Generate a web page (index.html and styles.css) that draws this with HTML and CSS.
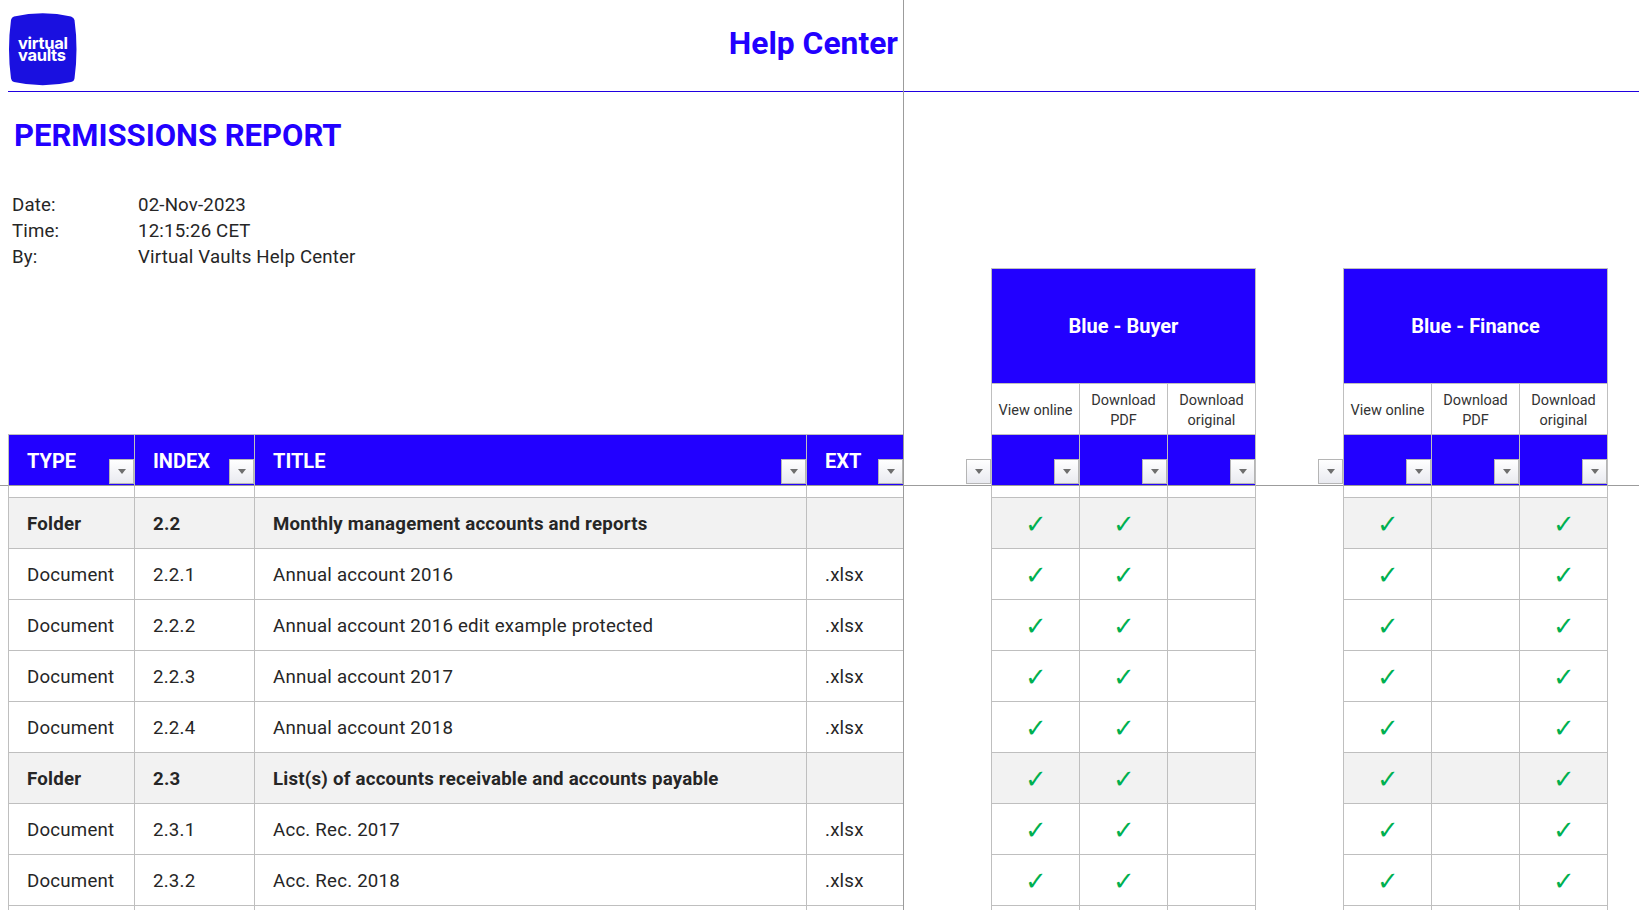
FILE: index.html
```html
<!DOCTYPE html>
<html lang="en">
<head>
<meta charset="utf-8">
<title>Permissions Report</title>
<link rel="stylesheet" href="styles.css">
</head>
<body>
<div class="sheet">
  <div class="freeze"></div>
  <header class="banner">
    <div class="banner-left">
      <svg class="logo" viewBox="0 0 70 76" aria-label="Virtual Vaults">
        <path class="logo-shape" d="M5 4.5 Q34 -2 62 4.5 Q65 5.5 65.500 8 Q69.500 37 65.500 66.500 Q65 69.500 62 70 Q34 76.500 5 70 Q2.500 69.500 2 66.500 Q-2 37 2 8 Q2.500 5 5 4.500 Z"/>
        <text class="logo-text"><tspan x="9" y="37">virtual</tspan><tspan x="9" y="48.500">vaults</tspan></text>
      </svg>
      <div class="help">Help Center</div>
    </div>
  </header>

  <section class="upper">
    <div class="intro">
      <h1 class="title">PERMISSIONS REPORT</h1>
      <dl class="meta">
        <dt>Date:</dt><dd>02-Nov-2023</dd>
        <dt>Time:</dt><dd>12:15:26 CET</dd>
        <dt>By:</dt><dd>Virtual Vaults Help Center</dd>
      </dl>
    </div>
    <div class="group g1">Blue - Buyer</div>
    <div class="edge e1"></div>
    <div class="group g2">Blue - Finance</div>
    <div class="edge e2"></div>
    <div class="sub s1">View online</div>
    <div class="sub s2">Download<br>PDF</div>
    <div class="sub s3">Download<br>original</div>
    <div class="sub s5">View online</div>
    <div class="sub s6">Download<br>PDF</div>
    <div class="sub s7">Download<br>original</div>
  </section>

  <div class="row head">
    <div class="hc blank"></div>
    <div class="hc th"><span>TYPE</span><i class="filter"></i></div>
    <div class="hc th"><span>INDEX</span><i class="filter"></i></div>
    <div class="hc th"><span>TITLE</span><i class="filter"></i></div>
    <div class="hc th"><span>EXT</span><i class="filter"></i></div>
    <div class="hc free"><span></span><i class="filter"></i></div>
    <div class="hc th"><span></span><i class="filter"></i></div>
    <div class="hc th"><span></span><i class="filter"></i></div>
    <div class="hc th"><span></span><i class="filter"></i></div>
    <div class="hc free line"><span></span><i class="filter"></i></div>
    <div class="hc th"><span></span><i class="filter"></i></div>
    <div class="hc th"><span></span><i class="filter"></i></div>
    <div class="hc th"><span></span><i class="filter"></i></div>
    <div class="hc free line"></div>
  </div>

  <div class="row spacer">
    <div></div><div class="c"></div><div class="c"></div><div class="c"></div><div class="c"></div><div></div>
    <div class="c"></div><div class="c"></div><div class="c"></div><div class="e"></div>
    <div class="c"></div><div class="c"></div><div class="c"></div><div class="e"></div>
  </div>

  <div class="row folder">
    <div></div><div class="c t">Folder</div><div class="c t">2.2</div><div class="c t">Monthly management accounts and reports</div><div class="c t"></div><div></div>
    <div class="c k">✓</div><div class="c k">✓</div><div class="c k"></div><div class="e"></div>
    <div class="c k">✓</div><div class="c k"></div><div class="c k">✓</div><div class="e"></div>
  </div>
  <div class="row">
    <div></div><div class="c t">Document</div><div class="c t">2.2.1</div><div class="c t">Annual account 2016</div><div class="c t">.xlsx</div><div></div>
    <div class="c k">✓</div><div class="c k">✓</div><div class="c k"></div><div class="e"></div>
    <div class="c k">✓</div><div class="c k"></div><div class="c k">✓</div><div class="e"></div>
  </div>
  <div class="row">
    <div></div><div class="c t">Document</div><div class="c t">2.2.2</div><div class="c t">Annual account 2016 edit example protected</div><div class="c t">.xlsx</div><div></div>
    <div class="c k">✓</div><div class="c k">✓</div><div class="c k"></div><div class="e"></div>
    <div class="c k">✓</div><div class="c k"></div><div class="c k">✓</div><div class="e"></div>
  </div>
  <div class="row">
    <div></div><div class="c t">Document</div><div class="c t">2.2.3</div><div class="c t">Annual account 2017</div><div class="c t">.xlsx</div><div></div>
    <div class="c k">✓</div><div class="c k">✓</div><div class="c k"></div><div class="e"></div>
    <div class="c k">✓</div><div class="c k"></div><div class="c k">✓</div><div class="e"></div>
  </div>
  <div class="row">
    <div></div><div class="c t">Document</div><div class="c t">2.2.4</div><div class="c t">Annual account 2018</div><div class="c t">.xlsx</div><div></div>
    <div class="c k">✓</div><div class="c k">✓</div><div class="c k"></div><div class="e"></div>
    <div class="c k">✓</div><div class="c k"></div><div class="c k">✓</div><div class="e"></div>
  </div>
  <div class="row folder">
    <div></div><div class="c t">Folder</div><div class="c t">2.3</div><div class="c t">List(s) of accounts receivable and accounts payable</div><div class="c t"></div><div></div>
    <div class="c k">✓</div><div class="c k">✓</div><div class="c k"></div><div class="e"></div>
    <div class="c k">✓</div><div class="c k"></div><div class="c k">✓</div><div class="e"></div>
  </div>
  <div class="row">
    <div></div><div class="c t">Document</div><div class="c t">2.3.1</div><div class="c t">Acc. Rec. 2017</div><div class="c t">.xlsx</div><div></div>
    <div class="c k">✓</div><div class="c k">✓</div><div class="c k"></div><div class="e"></div>
    <div class="c k">✓</div><div class="c k"></div><div class="c k">✓</div><div class="e"></div>
  </div>
  <div class="row">
    <div></div><div class="c t">Document</div><div class="c t">2.3.2</div><div class="c t">Acc. Rec. 2018</div><div class="c t">.xlsx</div><div></div>
    <div class="c k">✓</div><div class="c k">✓</div><div class="c k"></div><div class="e"></div>
    <div class="c k">✓</div><div class="c k"></div><div class="c k">✓</div><div class="e"></div>
  </div>
  <div class="row">
    <div></div><div class="c"></div><div class="c"></div><div class="c"></div><div class="c"></div><div></div>
    <div class="c"></div><div class="c"></div><div class="c"></div><div class="e"></div>
    <div class="c"></div><div class="c"></div><div class="c"></div><div class="e"></div>
  </div>
</div>
</body>
</html>
```
FILE: styles.css
```css
:root {
  --cols: 8px 126px 120px 552px 97px 88px 88px 88px 88px 88px 88px 88px 88px 32px;
  --blue: #2200ff;
  --grid: #bfbfbf;
  --freeze: #9c9c9c;
}
* { box-sizing: border-box; }
html, body { margin: 0; height: 910px; overflow: hidden; background: #fff; }
body { font-family: Roboto, "Liberation Sans", sans-serif; color: #262626; }
.sheet { position: relative; height: 910px; overflow: hidden; }
.freeze { position: absolute; left: 903px; top: 0; bottom: 0; width: 1px; background: var(--freeze); z-index: 2; }

.banner { height: 92px; margin-left: 8px; border-bottom: 1px solid #2000e0; }
.banner-left { width: 895px; height: 91px; display: flex; align-items: flex-start; justify-content: space-between; }
.logo { width: 70px; height: 76px; margin-top: 12px; margin-left: 1px; flex: none; }
.logo-shape { fill: #1a10e0; }
.logo-text { font-family: Inter, Lato, sans-serif; font-weight: 700; font-size: 16.5px; fill: #fff; letter-spacing: -0.3px; }
.help { color: var(--blue); font-weight: 700; font-size: 31.8px; line-height: 38px; margin-top: 24px; margin-right: 5px; }

.upper { display: grid; grid-template-columns: var(--cols); grid-template-rows: 176px 115px 51px; }
.intro { grid-column: 2 / 6; grid-row: 1 / 4; padding-top: 26px; }
.title { margin: 0 0 0 6px; color: var(--blue); font-size: 31px; line-height: 36px; font-weight: 700; }
.meta { margin: 38px 0 0 4px; display: grid; grid-template-columns: 126px 1fr; font-size: 18.67px; line-height: 26px; letter-spacing: 0.17px; }
.meta dt, .meta dd { margin: 0; }

.group { grid-row: 2; background: var(--blue); color: #fff; font-weight: 700; font-size: 20px; display: flex; align-items: center; justify-content: center; border: 1px solid var(--grid); border-width: 1px 0 0 1px; }
.g1 { grid-column: 7 / 10; }
.g2 { grid-column: 11 / 14; }
.edge { grid-row: 2 / 4; border-left: 1px solid var(--grid); }
.e1 { grid-column: 10; }
.e2 { grid-column: 14; }
.sub { grid-row: 3; font-size: 14.5px; line-height: 20px; padding-top: 4px; color: #333; text-align: center; display: flex; align-items: center; justify-content: center; border: 1px solid var(--grid); border-width: 1px 0 0 1px; }
.s1 { grid-column: 7; }
.s2 { grid-column: 8; }
.s3 { grid-column: 9; }
.s5 { grid-column: 11; }
.s6 { grid-column: 12; }
.s7 { grid-column: 13; }

.row { display: grid; grid-template-columns: var(--cols); grid-template-rows: 51px; }
.head { grid-template-rows: 52px; }
.hc { display: flex; justify-content: space-between; border-bottom: 1px solid var(--freeze); }
.hc span { align-self: center; padding-top: 1px; }
.th { background: var(--blue); color: #fff; font-weight: 700; font-size: 20px; padding-left: 18px; border-left: 1px solid var(--grid); border-top: 1px solid var(--grid); }
.free.line { border-left: 1px solid var(--grid); }
.filter { align-self: flex-end; width: 25px; height: 25px; margin-bottom: 1px; flex: none; border: 1px solid #b5b5b5; background: linear-gradient(#fff, #e9eaf0); display: flex; align-items: center; justify-content: center; }
.filter::after { content: ""; border-style: solid; border-width: 5px 4.5px 0; border-color: #6e6e6e transparent transparent; }

.spacer { grid-template-rows: 11px; }
.c { border-left: 1px solid var(--grid); border-top: 1px solid var(--grid); }
.spacer .c { border-top: 0; }
.e { border-left: 1px solid var(--grid); }
.t { font-size: 18.67px; letter-spacing: 0.22px; padding-left: 18px; padding-top: 2px; display: flex; align-items: center; white-space: nowrap; }
.k { color: #00b050; font-family: "DejaVu Sans", sans-serif; font-size: 26px; line-height: 1; font-weight: 700; padding: 2px 0 0 1px; display: flex; align-items: center; justify-content: center; }
.folder .c { background: #f2f2f2; }
.folder .t { font-weight: 700; }
```
